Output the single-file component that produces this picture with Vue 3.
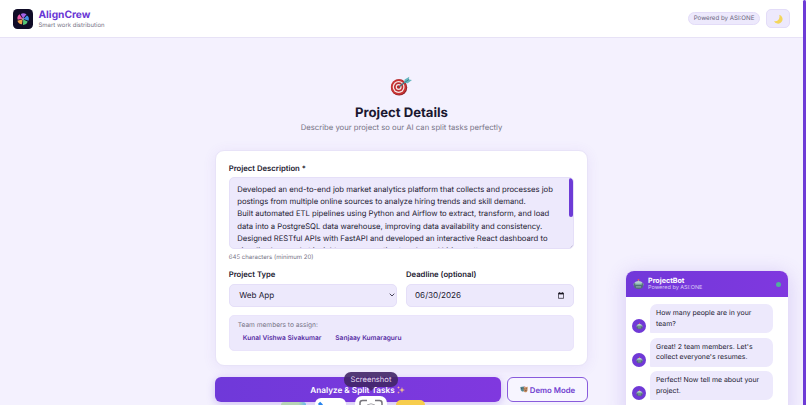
<template>
  <div class="app">
    <svg class="sprite" aria-hidden="true">
      <symbol id="robot" viewBox="0 0 20 20">
        <circle cx="10" cy="2.4" r="1.7" fill="#e8505b" />
        <path d="M9.2 3.5h1.6v3H9.2z" fill="#b9c9cc" />
        <path d="M2.500 10c0-4 3.500-5.500 7.500-5.500s7.500 1.500 7.500 5.500z" fill="#b5cccd" />
        <rect x="0.500" y="8.500" width="19" height="4.500" rx="1.500" fill="#7f9ba1" />
        <path d="M2 9h16v5.500c0 3-3 4.500-8 4.500s-8-1.500-8-4.500z" fill="#526f79" />
        <path d="M5 9.800h10" stroke="#a9dccb" stroke-width="2.200" stroke-linecap="round" />
        <path d="M5.500 14h9v2.200h-9z" fill="#8ba7ab" />
      </symbol>
    </svg>

    <header class="header">
      <div class="brand">
        <svg class="logo" viewBox="0 0 20 20">
          <rect width="20" height="20" rx="4.500" fill="#100c27" />
          <path
            v-for="petal in petals"
            :key="petal.angle"
            d="M10 9.500 L6.800 5.800 Q8.500 3.200 12.400 4.600 Z"
            :fill="petal.color"
            :transform="`rotate(${petal.angle} 10 10)`"
          />
          <circle cx="10" cy="10" r="0.800" fill="#fff" />
        </svg>
        <div>
          <div class="brand-name">AlignCrew</div>
          <div class="brand-tagline">Smart work distribution</div>
        </div>
      </div>
      <div class="header-actions">
        <span class="powered">Powered by ASI:ONE</span>
        <button class="theme-toggle" aria-label="Toggle theme">
          <svg viewBox="0 0 10 10">
            <path d="M6.200 0.800A4.500 4.500 0 1 1 0.900 6.900C4.300 8 7.500 5 6.200 0.800Z" fill="#f3d65b" />
          </svg>
        </button>
      </div>
    </header>

    <main class="main">
      <svg class="target" viewBox="0 0 24 22">
        <circle cx="9.500" cy="12" r="8.500" fill="#8f2027" />
        <circle cx="9" cy="11.500" r="8.200" fill="#c93434" />
        <circle cx="9" cy="11.500" r="6.200" fill="#f5e8e5" />
        <circle cx="9" cy="11.500" r="4.900" fill="#bd3033" />
        <circle cx="9" cy="11.500" r="3.100" fill="#f5e8e5" />
        <circle cx="9" cy="11.500" r="1.900" fill="#b9292e" />
        <path d="M9.500 11.300 17 5.500" stroke="#486d79" stroke-width="1.300" />
        <path d="M14.500 7.200 15.300 3.600 20.200 0.800 19.500 3.600 23 4.300 18.500 7.500Z" fill="#66b7bf" />
        <path d="M15 7 20 3.500" stroke="#367b89" stroke-width="0.900" />
      </svg>
      <h1 class="title">Project Details</h1>
      <p class="subtitle">Describe your project so our AI can split tasks perfectly</p>

      <section class="card">
        <label class="label">Project Description *</label>
        <div class="description">
          <div class="description-text">
            <div v-for="line in description" :key="line">{{ line }}</div>
          </div>
          <div class="description-thumb"></div>
          <svg class="grip" viewBox="0 0 4 4"><path d="M0.500 3.500 3.500 0.500M2.500 3.500 3.500 2.500" stroke="#8b879c" stroke-width="0.500" /></svg>
        </div>
        <div class="count">645 characters (minimum 20)</div>

        <div class="fields">
          <div>
            <label class="label">Project Type</label>
            <div class="field select">
              <span>Web App</span>
              <svg class="chevron" viewBox="0 0 6 4"><path d="M0.700 0.700 3 3 5.300 0.700" fill="none" stroke="#37334a" stroke-width="0.900" /></svg>
            </div>
          </div>
          <div>
            <label class="label">Deadline (optional)</label>
            <div class="field date">
              <span>06/30/2026</span>
              <svg class="calendar" viewBox="0 0 7 8"><path d="M0.500 1.300h6v6h-6zM1.700 0v1.500M5.300 0v1.500" fill="none" stroke="#17141f" stroke-width="0.800" /><path d="M0.500 1h6v1.700h-6z" fill="#17141f" /></svg>
            </div>
          </div>
        </div>

        <div class="team">
          <div class="team-title">Team members to assign:</div>
          <div class="team-list">
            <span v-for="member in members" :key="member">{{ member }}</span>
          </div>
        </div>
      </section>

      <div class="actions">
        <button class="analyze">
          <span>Analyze &amp; Split Tasks</span>
          <svg class="sparkles" viewBox="0 0 8 8">
            <path d="M5 1 5.700 3.200 8 4 5.700 4.800 5 7 4.300 4.800 2 4 4.300 3.200Z" fill="#f5c38d" />
            <path d="M1.500 0 1.900 1.100 3 1.500 1.900 1.900 1.500 3 1.100 1.900 0 1.500 1.100 1.100ZM1.500 5 1.800 6 2.800 6.500 1.800 7 1.500 8 1.200 7 0.200 6.500 1.200 6Z" fill="#f5a8a0" />
          </svg>
        </button>
        <button class="demo">
          <svg class="masks" viewBox="0 0 9 8">
            <path d="M0.300 1.200 4.500 0.500 5 4.500C4.500 7 1.400 6.500 0.800 4.500Z" fill="#4f8790" />
            <path d="M4 1.600 8.700 0.800 8.500 5C7.800 7.700 5 8 4.200 5.500Z" fill="#cb9160" />
            <path d="M1.200 2.800h1M3 2.500h1M5 3.400h1M7 3.100h1M5.400 5.500 7.500 5" stroke="#4a3541" stroke-width="0.700" />
            <path d="M5 0.800 6 0.100" stroke="#bd4754" />
          </svg>
          <span>Demo Mode</span>
        </button>
      </div>
    </main>

    <aside class="chat">
      <div class="chat-header">
        <svg class="chat-robot"><use href="#robot" /></svg>
        <div>
          <div class="chat-name">ProjectBot</div>
          <div class="chat-powered">Powered by ASI:ONE</div>
        </div>
        <span class="online"></span>
      </div>
      <div class="messages">
        <div v-for="message in messages" :key="message[0]" class="message">
          <div class="avatar"><svg><use href="#robot" /></svg></div>
          <div class="bubble">
            <div v-for="line in message" :key="line">{{ line }}</div>
          </div>
        </div>
        <div class="message"><div class="avatar"></div></div>
      </div>
    </aside>

    <div class="dock">
      <div class="tooltip">Screenshot</div>
      <div class="dock-icon maps"></div>
      <div class="dock-icon finder">
        <svg viewBox="0 0 30 8"><path d="M3.500 6.500 5 5 7 7" fill="none" stroke="#2684ed" stroke-width="2" /></svg>
      </div>
      <div class="dock-icon capture">
        <svg viewBox="0 0 32 9"><path d="M5 9V7Q5 4.500 7.500 4.500H12M20 4.500h4.500Q27 4.500 27 7v2" fill="none" stroke="#77757c" stroke-width="1.500" /><path d="M12 9Q16 6.500 20 9" fill="none" stroke="#aaa8ae" stroke-width="1" /></svg>
      </div>
      <div class="dock-icon notes"></div>
    </div>
    <div class="page-thumb"></div>
  </div>
</template>

<script setup>
const petals = [
  { angle: -60, color: "#e95aa5" },
  { angle: 12, color: "#a463e8" },
  { angle: 84, color: "#438fe5" },
  { angle: 156, color: "#55c878" },
  { angle: 228, color: "#f0a14a" }
];

const description = [
  "Developed an end-to-end job market analytics platform that collects and processes job",
  "postings from multiple online sources to analyze hiring trends and skill demand.",
  "Built automated ETL pipelines using Python and Airflow to extract, transform, and load",
  "data into a PostgreSQL data warehouse, improving data availability and consistency.",
  "Designed RESTful APIs with FastAPI and developed an interactive React dashboard to",
  "visualize key market insights, compensation trends, and hiring patterns."
];

const members = ["Kunal Vishwa Sivakumar", "Sanjaay Kumaraguru"];

const messages = [
  ["How many people are in your", "team?"],
  ["Great! 2 team members. Let's", "collect everyone's resumes."],
  ["Perfect! Now tell me about your", "project."]
];
</script>

<style>
body {
  margin: 0;
  overflow: hidden;
}
</style>

<style scoped>
.app {
  position: relative;
  box-sizing: border-box;
  width: 806px;
  height: 405px;
  padding-right: 3px;
  overflow: hidden;
  background: #f4f1fe;
  color: #1b1830;
  font-family: Inter, sans-serif;
  font-size: 8px;
  text-rendering: geometricPrecision;
  white-space: nowrap;
}

.app * {
  box-sizing: border-box;
}

.sprite {
  position: absolute;
  width: 0;
  height: 0;
}

svg {
  display: block;
  flex: none;
}

button {
  padding: 0;
  font-family: inherit;
  text-rendering: inherit;
}

.header {
  display: flex;
  align-items: center;
  justify-content: space-between;
  height: 38px;
  padding: 0 13px;
  background: #fff;
  border-bottom: 1px solid #e7e2f6;
}

.brand {
  display: flex;
  align-items: center;
  gap: 5.5px;
}

.logo {
  width: 20px;
  height: 20px;
}

.brand-name {
  color: #6936d5;
  font-size: 10.2px;
  font-weight: 700;
  line-height: 12px;
}

.brand-tagline {
  margin-top: 1px;
  color: #777486;
  font-size: 6px;
  line-height: 7px;
}

.header-actions {
  display: flex;
  align-items: center;
  gap: 6px;
}

.powered {
  width: 72px;
  height: 13px;
  background: #ede9fc;
  border: 1px solid #e3dcf8;
  border-radius: 7px;
  color: #69657b;
  font-size: 6.15px;
  line-height: 12px;
  text-align: center;
}

.theme-toggle {
  display: flex;
  align-items: center;
  justify-content: center;
  width: 24px;
  height: 19px;
  background: #ede9fc;
  border: 1px solid #e3dcf8;
  border-radius: 5px;
}

.theme-toggle svg {
  width: 10px;
  height: 10px;
}

.main {
  display: flex;
  flex-direction: column;
  align-items: center;
  padding-top: 38px;
}

.target {
  width: 23px;
  height: 21px;
}

.title {
  margin: 7px 0 0;
  font-size: 13.15px;
  font-weight: 700;
  line-height: 18px;
}

.subtitle {
  margin: 1px 0 0;
  color: #777486;
  font-size: 7.7px;
  line-height: 10px;
}

.card {
  width: 372.5px;
  height: 216px;
  margin-top: 17px;
  padding: 13px 12.5px 12px;
  background: #fff;
  border: 1px solid #e8e3f8;
  border-radius: 9px;
  box-shadow: 0 2px 14px rgba(109, 64, 216, 0.09);
}

.label {
  display: block;
  font-size: 7.7px;
  font-weight: 600;
  line-height: 10px;
}

.description {
  position: relative;
  height: 72px;
  margin-top: 3px;
  padding: 6px 7.5px;
  overflow: hidden;
  background: #ede9fc;
  border: 1px solid #e5dff8;
  border-radius: 5px;
}

.description-text {
  font-size: 7.68px;
  line-height: 12.2px;
}

.description-thumb {
  position: absolute;
  top: 0;
  right: 0;
  width: 4px;
  height: 39px;
  background: #6d3bd6;
  border-radius: 2px;
}

.grip {
  position: absolute;
  right: 0;
  bottom: 0;
  width: 3px;
  height: 3px;
}

.count {
  margin-top: 4px;
  color: #777486;
  font-size: 6.05px;
  line-height: 9px;
}

.fields {
  display: grid;
  grid-template-columns: 1fr 1fr;
  gap: 9px;
  margin-top: 8px;
}

.field {
  display: flex;
  align-items: center;
  justify-content: space-between;
  height: 23px;
  margin-top: 4px;
  padding-bottom: 1px;
  background: #ede9fc;
  border: 1px solid #e5dff8;
  border-radius: 5px;
  font-size: 8.1px;
}

.select {
  padding-right: 1px;
  padding-left: 9.5px;
}

.date {
  padding-right: 9px;
  padding-left: 8px;
}

.chevron {
  width: 6px;
  height: 4px;
}

.calendar {
  width: 6px;
  height: 7px;
}

.team {
  height: 36px;
  margin-top: 8px;
  padding: 5px 8px;
  background: #ede9fc;
  border: 1px solid #eae4fb;
  border-radius: 5px;
}

.team-title {
  color: #777486;
  font-size: 6.6px;
  line-height: 9px;
}

.team-list {
  display: flex;
  gap: 14px;
  margin-top: 4px;
  padding-left: 5px;
  color: #552ba2;
  font-size: 6.6px;
  font-weight: 600;
  line-height: 9px;
}

.actions {
  display: flex;
  gap: 6px;
  width: 373px;
  margin-top: 11px;
}

.analyze,
.demo {
  display: flex;
  align-items: center;
  justify-content: center;
  height: 25px;
  border-radius: 6px;
  font-size: 8.2px;
  font-weight: 600;
}

.analyze {
  gap: 2px;
  width: 286px;
  padding-right: 1px;
  background: linear-gradient(90deg, #6f39d9, #8038df);
  border: 0;
  color: #fff;
  box-shadow: 0 2px 8px rgba(109, 57, 217, 0.28);
}

.sparkles {
  width: 8px;
  height: 8px;
}

.demo {
  gap: 2px;
  width: 81px;
  background: #f7f5ff;
  border: 1.5px solid #895bdc;
  color: #7040cf;
  font-size: 7.8px;
}

.masks {
  width: 8px;
  height: 7px;
}

.chat {
  position: absolute;
  top: 270px;
  left: 625px;
  width: 164px;
  height: 150px;
  overflow: hidden;
  background: #fff;
  border: 1px solid #e6def9;
  border-radius: 9px;
  box-shadow: 0 3px 20px rgba(109, 64, 216, 0.2);
}

.chat-header {
  display: flex;
  align-items: center;
  height: 27px;
  margin: -1px -1px 0;
  padding: 1px 8px 0;
  background: linear-gradient(90deg, #7138d9, #8038df);
  color: #fff;
}

.chat-robot {
  width: 11px;
  height: 12px;
  margin-right: 4px;
}

.chat-name {
  font-size: 7.15px;
  font-weight: 700;
  line-height: 8px;
}

.chat-powered {
  color: #d8c9f6;
  font-size: 5.5px;
  line-height: 7px;
}

.online {
  width: 5px;
  height: 5px;
  margin-left: auto;
  background: #51ae9c;
  border-radius: 50%;
}

.messages {
  display: flex;
  flex-direction: column;
  gap: 4.5px;
  padding: 7px 6px;
}

.message {
  display: flex;
  align-items: flex-end;
  gap: 4px;
}

.avatar {
  display: flex;
  align-items: center;
  justify-content: center;
  flex: none;
  width: 14px;
  height: 14px;
  background: #7039d6;
  border-radius: 50%;
}

.avatar svg {
  width: 7px;
  height: 8px;
}

.bubble {
  width: 123px;
  height: 29px;
  padding: 4px 6px;
  background: #ede9fc;
  border-radius: 7px 7px 7px 1px;
  font-size: 6.92px;
  line-height: 10.5px;
}

/* Desktop dock peeking over the bottom edge of the page */
.dock {
  position: absolute;
  left: 281px;
  bottom: 0;
  display: flex;
  align-items: flex-end;
  gap: 9px;
}

.tooltip {
  position: absolute;
  left: 63px;
  bottom: 18px;
  width: 54px;
  height: 15px;
  background: rgba(65, 38, 103, 0.9);
  border-radius: 7px;
  color: #e5dcf1;
  font-size: 7.6px;
  line-height: 15px;
  text-align: center;
}

.tooltip::after {
  content: "";
  position: absolute;
  top: 15px;
  left: 23px;
  border: 4px solid transparent;
  border-top-color: rgba(65, 38, 103, 0.9);
  border-bottom: 0;
}

.maps {
  width: 25px;
  height: 3px;
  background: linear-gradient(90deg, #b7d4b5 70%, #68b7ec);
  border-radius: 5px 5px 0 0;
}

.finder {
  width: 31px;
  height: 7px;
  background: #fff;
  border-radius: 6px 6px 0 0;
}

.capture {
  width: 32px;
  height: 9px;
  background: #fff;
  border-radius: 7px 7px 0 0;
}

.notes {
  width: 29px;
  height: 5px;
  background: #f7cd4d;
  border-radius: 6px 6px 0 0;
}

.page-thumb {
  position: absolute;
  top: 0;
  right: 0;
  width: 3px;
  height: 405px;
  background: #6d3bd6;
  border-radius: 2px 2px 0 0;
}
</style>
